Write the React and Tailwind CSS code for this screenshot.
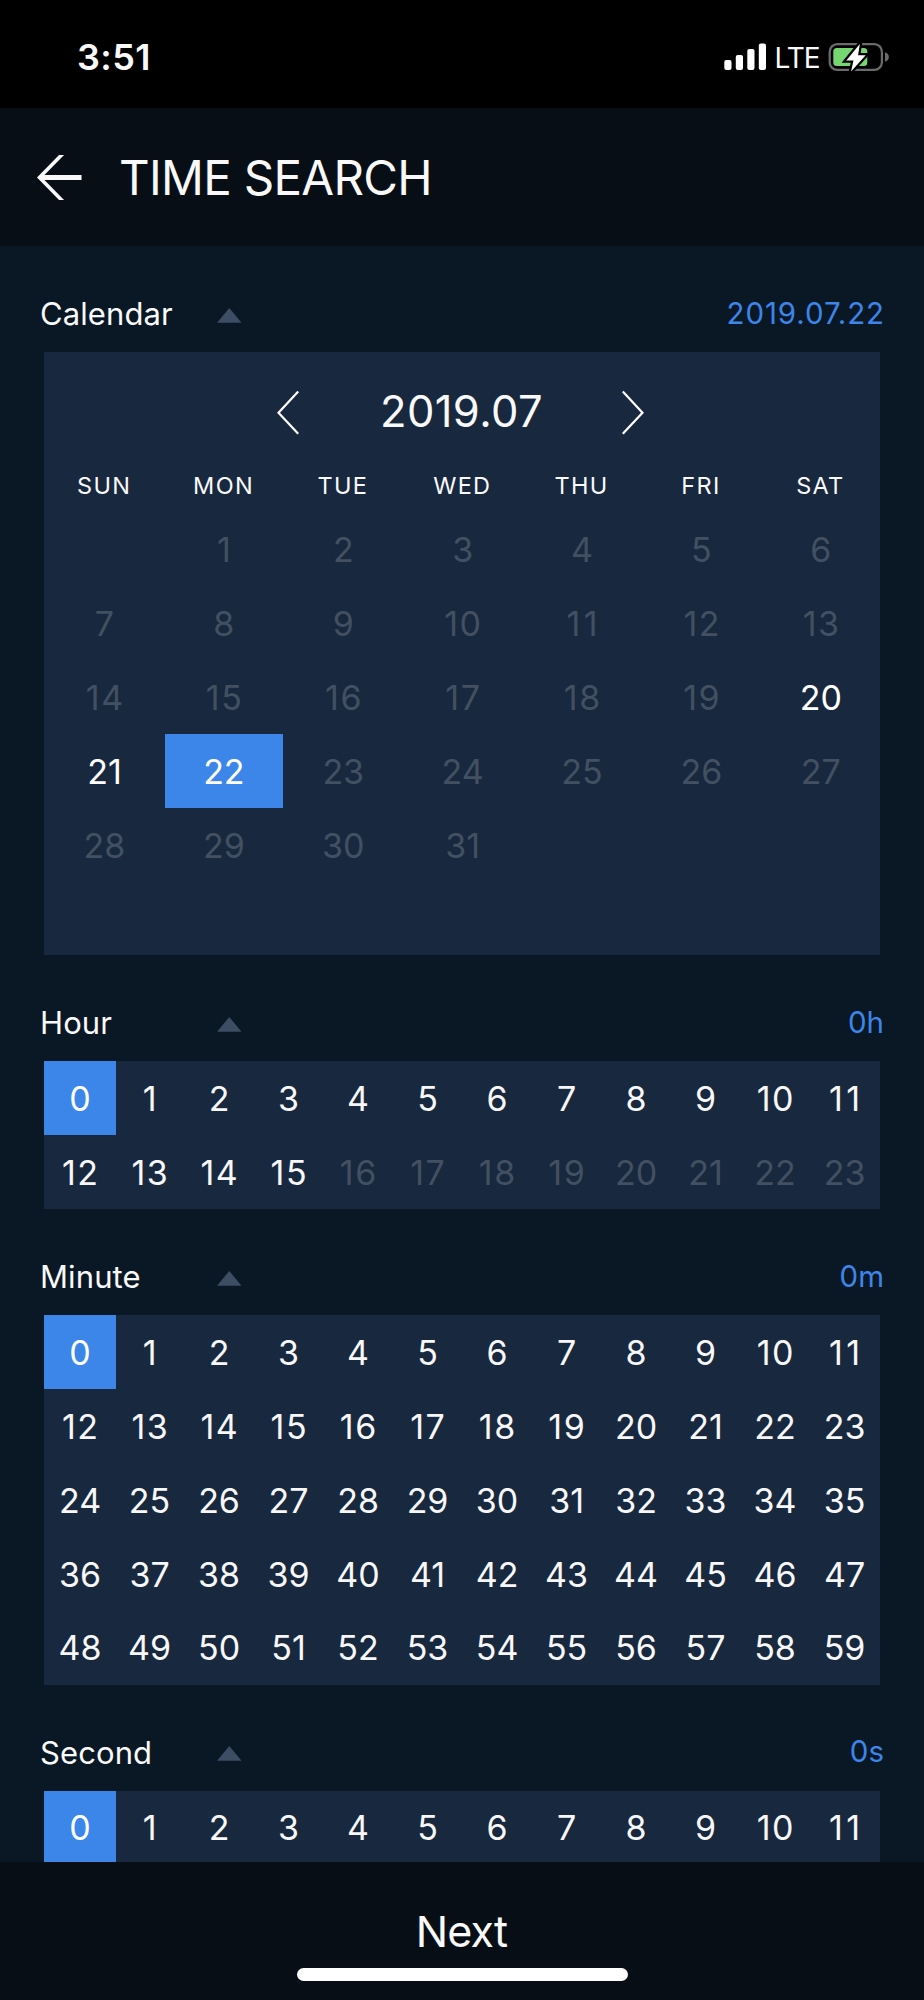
import React, { useState } from 'react';

const WEEKDAYS = ['SUN', 'MON', 'TUE', 'WED', 'THU', 'FRI', 'SAT'];
const AVAILABLE_DAYS = [20, 21, 22];
const LAST_HOUR = 15;

// July 2019 starts on a Monday
const DAYS = [null, ...Array.from({ length: 31 }, (_, i) => i + 1)];

function range(n) {
  return Array.from({ length: n }, (_, i) => i);
}

function digitSpacing(n) {
  if (n === 11) return 'tracking-[3.5px] -mr-[3.5px]';
  if (n >= 10 && n < 20) return 'tracking-[1.5px] -mr-[1.5px]';
  return '';
}

function StatusBar() {
  return (
    <div className="flex h-[108px] items-center justify-between bg-black pl-[77px] pr-[35px] pt-[6px]">
      <span className="text-[36px] leading-none font-semibold tracking-[0.4px]">3:51</span>
      <div className="flex items-center">
        <svg width="42" height="28" viewBox="0 0 42 28" fill="#fff">
          <rect x="0.3" y="17" width="7.2" height="10" rx="2" />
          <rect x="11.8" y="12" width="7.2" height="15" rx="2" />
          <rect x="23.3" y="6" width="7.2" height="21" rx="2" />
          <rect x="34.8" y="0.5" width="7.2" height="26.5" rx="2" />
        </svg>
        <span className="ml-[8.5px] w-[53.5px] pt-[1.5px] text-[28px] leading-none tracking-[-1px]">LTE</span>
        <svg width="61" height="30" viewBox="0 0 61 30">
          <rect x="1.7" y="2.2" width="52.2" height="25.6" rx="7.5" fill="none" stroke="#6b6b6b" strokeWidth="2.2" />
          <path d="M57 10.2c2.4.8 3.9 2.6 3.9 4.8s-1.5 4-3.9 4.8z" fill="#6b6b6b" />
          <rect x="5.3" y="6" width="34" height="18" rx="3.5" fill="#75d672" />
          <path
            d="M31.8 2 18.3 18.5h7.2l-2.5 11L37.7 13.2h-7.6z"
            fill="#fff"
            stroke="#000"
            strokeWidth="4.5"
            paintOrder="stroke"
          />
        </svg>
      </div>
    </div>
  );
}

function Header() {
  return (
    <div className="flex h-[138px] items-center bg-[#070e15] pl-[37px]">
      <svg width="45" height="45" viewBox="0 0 45 45" fill="none" stroke="#f9f9f9">
        <path d="M26.5-2 2.5 22.5 26.5 47" strokeWidth="3.6" />
        <path d="M3 22.5h41.5" strokeWidth="4.8" />
      </svg>
      <h1 className="ml-[37px] pt-[1px] text-[47.5px] leading-none tracking-[-0.7px]">TIME SEARCH</h1>
    </div>
  );
}

function SectionTitle({ label, value }) {
  return (
    <div className="flex h-[106px] items-center pt-[30px] pl-[40px] pr-[40px]">
      <span className="w-[177px] pb-[1px] text-[31px] leading-none tracking-[0.1px]">{label}</span>
      <svg width="25" height="15" viewBox="0 0 25 15" className="mt-[2.6px]">
        <path d="M12.3 0 24.5 14.7H0z" fill="#3c4d64" />
      </svg>
      <span className="ml-auto pb-[1px] text-[29.5px] leading-none text-[#3b86e8]">{value}</span>
    </div>
  );
}

function Chevron({ flip }) {
  return (
    <svg width="22" height="44" viewBox="0 0 22 44" fill="none" stroke="#fff" strokeWidth="2.2" className={flip ? '-scale-x-100' : ''}>
      <path d="M21.2 0.5 1.5 21.8l19.7 21" />
    </svg>
  );
}

function Calendar({ selected, onSelect }) {
  return (
    <div className="mx-[44px] h-[603.4px] bg-[#18283e] pt-[13px]">
      <div className="flex h-[95px] items-center justify-between pl-[232.5px] pr-[235.5px]">
        <Chevron />
        <span className="-mt-[1px] pl-[2px] text-[43.5px] leading-none tracking-[0.4px]">2019.07</span>
        <Chevron flip />
      </div>
      <div className="grid h-[52.6px] grid-cols-7 items-center pl-[0.5px]">
        {WEEKDAYS.map((d) => (
          <span key={d} className="-mt-[1px] text-center text-[23.5px] leading-none tracking-[1.3px]">{d}</span>
        ))}
      </div>
      <div className="grid auto-rows-[73.9px] grid-cols-7 gap-x-[1px] pl-[1.3px] text-[34px]">
        {DAYS.map((d, i) => {
          let style = 'text-[#425061]';
          if (AVAILABLE_DAYS.includes(d)) style = 'text-white';
          if (d === selected) style = 'bg-[#3b86e8] text-white';
          return (
            <button key={i} onClick={() => AVAILABLE_DAYS.includes(d) && onSelect(d)} className={`flex items-center justify-center pt-[1.2px] leading-none ${style}`}>
              <span className={digitSpacing(d)}>{d}</span>
            </button>
          );
        })}
      </div>
    </div>
  );
}

function NumberGrid({ count, max = count, selected, onSelect }) {
  return (
    <div className="mx-[44px] bg-[#18283e]">
      <div className="mr-[0.7px] ml-[1.3px] grid auto-rows-[73.9px] grid-cols-12 text-[34px]">
        {range(count).map((n) => {
          let style = 'text-[#f7f7f7]';
          if (n > max) style = 'text-[#425061]';
          if (n === selected) style = '-ml-[1.3px] -mr-[1px] bg-[#3b86e8] text-white';
          return (
            <button key={n} onClick={() => n <= max && onSelect(n)} className={`flex items-center justify-center pt-[1.5px] leading-none ${style}`}>
              <span className={digitSpacing(n)}>{n}</span>
            </button>
          );
        })}
      </div>
    </div>
  );
}

export default function App() {
  const [day, setDay] = useState(22);
  const [hour, setHour] = useState(0);
  const [minute, setMinute] = useState(0);
  const [second, setSecond] = useState(0);

  return (
    <div className="flex h-[2000px] w-[924px] flex-col overflow-hidden bg-[#0a1725] font-[Inter,sans-serif] text-[#f9f9f9]">
      <StatusBar />
      <Header />
      <main className="min-h-0 flex-1 overflow-hidden">
        <SectionTitle label="Calendar" value={<span className="-mr-[1px] tracking-[0.9px]">2019.07.{day}</span>} />
        <Calendar selected={day} onSelect={setDay} />
        <SectionTitle label="Hour" value={`${hour}h`} />
        <NumberGrid count={24} max={LAST_HOUR} selected={hour} onSelect={setHour} />
        <SectionTitle label="Minute" value={`${minute}m`} />
        <NumberGrid count={60} selected={minute} onSelect={setMinute} />
        <SectionTitle label="Second" value={`${second}s`} />
        <NumberGrid count={12} selected={second} onSelect={setSecond} />
      </main>
      <footer className="flex h-[138px] flex-col items-center bg-[#070e15] pt-[47.5px]">
        <button className="pr-[1px] text-[43px] leading-none tracking-[-0.8px]">Next</button>
        <div className="mt-[15px] h-[13.5px] w-[331px] rounded-full bg-white" />
      </footer>
    </div>
  );
}
